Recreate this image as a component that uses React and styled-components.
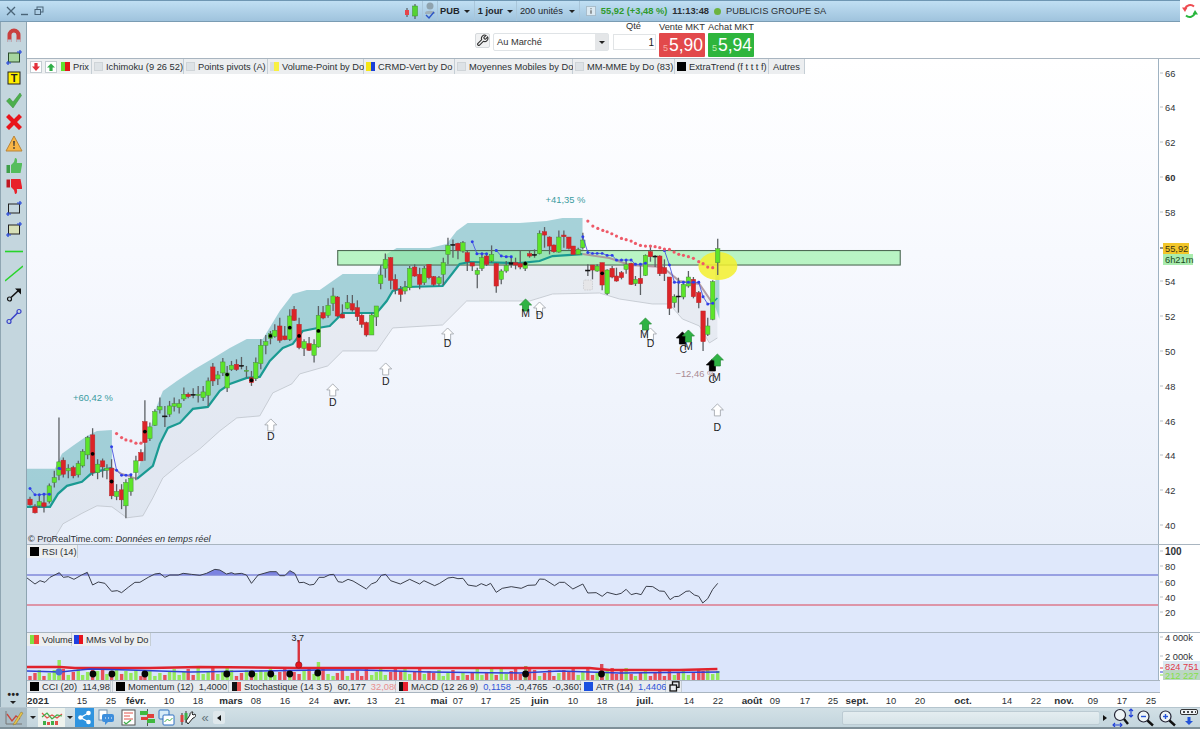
import React from "react";
import styled, { createGlobalStyle } from "styled-components";

const Global = createGlobalStyle`
  html, body { margin: 0; padding: 0; background: #fff; }
  body { font-family: "Liberation Sans", Arial, sans-serif; color: #2b2f33; }
  * { box-sizing: border-box; }
`;

/* ---------- chart data (read from the picture) ---------- */
const conv = (ox, oy, pts) => pts.map(([x, y]) => [ox + x / 3, oy + y / 3]);
const str = (pts) => pts.map((p) => p.join(",")).join(" ");
const cand = (ox, oy, rows) =>
  rows.map(([x, wt, bt, bb, wb, c, d]) => ({
    x: ox + x / 3, wt: oy + wt / 3, bt: oy + bt / 3, bb: oy + bb / 3, wb: oy + wb / 3, c, d: d == null ? null : oy + d / 3,
  }));

const candles = [
  ...cand(20, 380, [
    [30,348,355,372,375,"r"],[45,370,378,396,398,"r"],[58,345,362,375,380,"g"],[72,340,366,377,395,"r"],
    [88,308,315,362,368,"g"],[103,270,290,305,320,"g"],[117,110,243,283,298,"g"],[130,230,238,280,290,"r"],
    [145,250,262,270,292,"g"],[160,255,260,285,292,"r"],[175,240,248,282,290,"g"],[188,205,212,255,260,"g"],
    [203,165,170,222,235,"g"],[218,142,162,275,285,"r",219],[233,235,250,275,295,"g"],[248,233,240,258,290,"r"],
    [261,250,262,268,295,"g"],[275,235,262,345,355,"r",302],[290,310,332,347,358,"g"],[305,310,327,357,385,"r"],
    [318,295,305,375,412,"g"],[333,280,292,332,345,"g"],[348,225,240,275,298,"g"],[363,205,215,240,240,"r"],
    [375,58,122,185,240,"r",152],[390,125,138,173,180,"g"],[405,85,92,133,135,"g"],[420,50,77,87,98,"g"],
    [435,75,105,108,138,"k"],[449,60,75,100,108,"g"],[463,50,68,76,92,"g"],[478,55,68,80,98,"g"],
    [492,20,40,54,60,"g"],[505,35,40,47,52,"r"],[520,22,40,42,52,"k"],[535,15,40,44,65,"g"],
    [550,15,33,50,60,"g"],[565,-10,0,43,75,"g"],
  ]),
  ...cand(0, 0, [
    [639,1086,1098,1140,1155,"r"],[654,1110,1122,1134,1152,"g"],[669,1071,1083,1116,1125,"g"],[682,1095,1116,1161,1173,"g",1121],
  ]),
  ...cand(230, 210, [
    [5,450,463,476,480,"g"],[20,445,460,476,480,"r"],[35,438,463,465,475,"k"],[50,465,478,480,500,"g"],
    [65,480,500,515,525,"r",508],[78,440,455,503,510,"g"],[93,385,403,458,475,"g"],[108,372,392,403,430,"g"],
    [122,360,368,382,400,"g",375],[135,340,358,376,380,"g"],[150,320,345,388,395,"r"],[165,345,375,386,388,"r"],
    [180,295,315,385,390,"g",350],[193,285,295,328,330,"r"],[208,320,340,410,415,"r",375],[223,385,392,412,435,"g"],
    [238,378,398,418,420,"r"],[253,385,400,433,455,"g"],[266,285,313,408,410,"g",360],[280,285,305,321,325,"r"],
    [295,262,283,313,320,"g"],[310,230,255,277,300,"g"],[323,255,258,315,318,"r"],[338,280,310,321,322,"r"],
    [353,252,275,292,295,"g"],[368,252,278,297,302,"r"],[383,268,290,317,330,"r"],[396,310,313,340,350,"r"],
    [410,332,335,372,377,"r"],[426,305,312,372,372,"g"],[440,285,285,318,345,"g"],[453,163,192,218,235,"g"],
    [467,127,145,172,200,"g"],[483,138,140,208,235,"r"],[497,190,205,235,250,"r"],[513,225,235,250,272,"r"],
    [526,210,228,240,250,"g"],[540,165,172,230,238,"g"],[555,160,168,195,197,"r"],[570,170,190,220,235,"r"],
    [584,165,172,215,222,"g"],[598,160,160,200,205,"r"],[612,195,197,220,225,"r"],[628,195,200,218,225,"g"],
    [641,140,155,190,222,"g"],[655,80,103,130,160,"g"],[670,85,100,102,140,"k"],[685,95,97,118,145,"r"],
    [700,90,95,120,125,"g"],[713,120,125,152,180,"r"],[728,155,155,165,180,"r"],[743,170,178,190,232,"g"],
    [757,125,140,172,180,"g"],[771,130,135,160,165,"r"],[786,103,130,150,155,"g"],[800,155,158,225,245,"r"],
    [815,175,180,205,220,"g"],[830,150,163,180,185,"g"],[845,140,155,160,170,"k"],[858,140,155,162,175,"r"],
    [872,118,158,168,175,"r"],
  ]),
  ...cand(520, 190, [
    [17,210,215,232,240,"g",218],[30,178,188,195,200,"r"],[45,175,190,193,200,"k"],[60,118,127,188,190,"g"],
    [75,108,122,132,170,"r"],[90,136,138,165,190,"r"],[103,160,162,182,185,"r"],[118,118,138,183,185,"g"],
    [133,118,132,137,170,"r"],[148,138,138,172,175,"r"],[161,165,165,190,190,"r"],[176,170,175,190,192,"g"],
    [190,125,147,170,175,"g"],[205,220,237,239,255,"k"],[219,222,222,237,265,"r"],[233,220,225,240,242,"g"],
    [248,215,215,282,298,"r",247],[263,235,237,308,312,"g"],[278,225,232,258,262,"r"],[291,230,255,270,272,"r"],
    [306,240,245,260,265,"r"],[320,210,220,235,248,"g"],[335,215,217,280,282,"r"],[348,255,265,278,285,"g"],
    [363,225,262,278,312,"r"],[378,190,193,253,255,"g"],[393,162,182,197,212,"r"],[407,192,195,197,228,"k"],
    [421,193,195,248,255,"r"],[435,205,230,248,270,"r"],[450,258,258,352,372,"r"],[465,310,317,335,350,"g"],
    [477,260,315,317,365,"k"],[492,272,280,318,325,"g"],[507,240,258,285,290,"g"],[522,258,265,317,322,"r"],
    [538,300,305,335,352,"r"],[551,360,360,452,480,"r"],[565,380,405,430,435,"g"],[580,268,272,385,388,"g"],
    [595,143,173,215,252,"g"],
  ]),
].sort((a, b) => a.x - b.x);

const upper1 = [[27,468],[55,468],[62,453],[73,445],[87,435],[97,430],[112,429]];
const mid1 = [[27,506],[50,506],[58,493],[67,485],[82,481],[92,472],[112,467]];
const upper2 = [[137,478],[140,463],[148,437],[155,410],[163,390],[177,380],[195,368],[212,358],[230,347],[247,338],[263,338],[280,310],[293,293],[307,289],[320,289],[330,282],[343,273],[357,273],[377,273],[387,253],[397,247],[430,247],[447,243],[457,230],[468,222],[520,222],[547,220],[563,217],[583,217]];
const mid2 = [[137,478],[153,465],[160,443],[168,427],[180,422],[193,408],[208,406],[220,390],[230,383],[247,377],[260,376],[270,360],[283,347],[293,343],[303,330],[318,327],[330,325],[343,312],[377,312],[387,300],[393,290],[407,286],[443,285],[460,263],[470,261],[520,262],[540,260],[553,255],[583,253]];
const dull1 = [[112,467],[122,473],[137,478]];
const dull2 = [[583,253],[610,257],[630,264],[663,266],[680,280],[700,283],[713,302]];
const tail = [[713,302],[718,297]];
const lower = [[27,558],[53,540],[63,523],[83,512],[97,505],[112,506],[127,517],[143,515],[153,497],[163,477],[180,463],[200,448],[220,430],[237,417],[260,415],[273,392],[292,383],[300,373],[328,365],[343,350],[377,350],[393,327],[443,324],[467,300],[530,300],[553,293],[600,292],[620,298],[653,303],[670,303],[683,318],[700,325],[710,342],[718,337]];
const midAll = [...mid1, ...dull1.slice(1, 2), ...mid2, ...dull2.slice(1), ...tail.slice(1)];

const redDots = [
  ...conv(20, 380, [[290,158],[305,170],[318,177],[333,180],[348,187],[363,187]]),
  ...conv(520, 190, [[205,90],[220,105],[235,112],[250,118],[263,122],[277,128],[291,135],[306,142],[320,146],[335,150],[348,157],[363,163],[378,165],[393,165],[407,167],[421,170],[435,174],[450,175],[464,183],[478,190],[492,193],[507,197],[522,202],[538,212],[551,218],[565,228],[580,230]]),
];
const blueRuns = [
  conv(20, 380, [[30,323],[45,342],[58,342],[72,340],[88,340]]),
  conv(20, 380, [[117,262],[120,264]]),
  conv(20, 380, [[275,198],[290,268],[305,283],[318,283],[333,282]]),
  conv(230, 210, [[728,92],[742,128],[757,128],[771,128]]),
  conv(230, 210, [[800,118],[815,135],[830,137],[845,137]]),
  conv(520, 190, [[190,137],[205,184],[219,187],[233,187],[248,187],[263,193],[278,193],[291,207],[306,207],[320,207],[335,207],[348,220],[363,220],[378,217]]),
  conv(520, 190, [[435,178],[450,222],[465,274],[478,274],[492,274],[507,274],[522,274],[538,274],[551,317],[565,339],[580,337]]),
];
const arrows = [
  [271,418,"#fff","D",271,439],[333,383,"#fff","D",333,405],[386,362,"#fff","D",386,384],[448,327,"#fff","D",448,346],
  [526,298,"#2fb344","M",526,316],[540,301,"#fff","D",540,318],[651,327,"#fff","D",651,346],[646,317,"#2fb344","M",645,337],
  [683,331,"#000","C",684,352],[689,329,"#2fb344","M",689,349],[713,358,"#000","C",713,382],[718,353,"#2fb344","M",717,380],
  [718,403,"#fff","D",718,430],
];
const priceTicks = [[66,72],[64,106],[62,141],[60,176,1],[58,211],[54,280],[52,315],[50,350],[48,385],[46,420],[44,454],[42,489],[40,524]];
const rsi = [
  ...conv(0, 540, [[80,113],[105,132],[120,122],[135,127],[150,112],[178,98],[190,112],[205,110],[222,118],[245,105],[262,97],[278,135],[295,126],[315,130],[335,154],[352,152],[365,158],[385,142],[405,127],[420,127],[445,112],[465,102],[480,100],[495,112],[510,105],[535,105],[550,100],[575,103],[600,106],[620,100],[645,88],[660,90],[680,102],[695,98],[705,102],[725,100],[740,105],[755,130],[775,105],[810,95],[830,95]]),
  ...conv(280, 560, [[0,47],[15,47],[30,32],[45,40],[58,68],[72,67],[90,75],[103,73],[118,52],[133,52],[150,44],[162,43],[175,65],[188,67],[205,58],[220,63],[260,87],[275,72],[290,66],[305,46],[318,43],[333,62],[362,72],[390,58],[420,72],[433,62],[465,77],[480,70],[505,54],[520,52],[535,56],[550,55],[565,75],[590,79],[605,71],[620,77],[633,70],[650,97],[668,85],[695,80],[725,85],[745,76],[768,75],[780,57],[795,58],[825,77],[840,67],[855,67],[880,87],[910,72],[925,99],[950,98],[968,109],[983,97],[1010,104],[1025,100],[1040,88],[1055,104],[1070,100],[1085,104],[1100,79],[1120,80],[1140,93],[1155,94],[1172,119],[1185,110],[1198,109],[1220,94],[1230,93],[1245,105],[1258,109],[1270,129],[1285,116],[1300,88],[1315,70]]),
];
const dates = [["2021",38,1],["15",82],["25",111],["févr.",136,1],["10",169],["18",198],["mars",231,1],["08",256],["16",285],["24",314],["avr.",342,1],["13",372],["21",400],["mai",439,1],["07",458],["17",486],["25",515],["juin",540,1],["10",573],["18",602],["juil.",645,1],["14",689],["22",718],["août",752,1],["09",775],["17",805],["25",833],["sept.",857,1],["10",891],["20",920],["oct.",963,1],["14",1007],["22",1036],["nov.",1064,1],["09",1093],["17",1122],["25",1151]];
const volDots = [[93,674],[112,674],[145,674],[227,674],[252,674],[271,674],[290,674],[318,673],[526,674],[602,674]];
const volH = (i) => 4 + ((i * 37 + (i % 7) * 11) % 9);

const FS = 9.3;

/* ---------- layout ---------- */
const Page = styled.div`
  width: 1200px; height: 729px; overflow: hidden; display: flex; flex-direction: column; background: #fff; font-size: ${FS}px;
`;
const TopRow = styled.div`display: flex; height: 22px;`;
const TitleBar = styled.div`
  width: 1180px; height: 22px; display: flex; align-items: center; padding-left: 6px;
  background: linear-gradient(180deg, #c0dff3, #9fc3dd);
  border-top: 1px solid #6f97b3; border-bottom: 1px solid #7a9cb3;
`;
const WindowButtons = styled.div`display: flex; align-items: center; gap: 5px; width: 395px;`;
const ToolSegment = styled.div`
  display: flex; align-items: center; gap: ${(p) => p.$gap ?? 4}px; height: 20px; padding: 0 ${(p) => p.$pr ?? 3}px 0 ${(p) => p.$pl ?? 3}px;
  border-right: 1px solid #a9c6da; font-weight: ${(p) => (p.$bold ? 700 : 400)}; color: #1e252b; white-space: nowrap;
`;
const Caret = styled.span`
  display: inline-block; width: 0; height: 0;
  border-left: 3px solid transparent; border-right: 3px solid transparent; border-top: 3.5px solid #222;
`;
const Quote = styled.div`display: flex; align-items: center; gap: 5px; padding-left: 6px; white-space: nowrap;`;
const Gain = styled.span`color: #2f9a2c; font-weight: 700;`;
const Clock = styled.span`font-weight: 700;`;
const LiveDot = styled.span`width: 7px; height: 7px; border-radius: 50%; background: #6cb33f;`;
const Corner = styled.div`flex: 1; display: flex; align-items: center; justify-content: center;`;

const Body = styled.div`display: flex; flex: 1; min-height: 0;`;
const Sidebar = styled.div`
  width: 27px; display: flex; flex-direction: column; align-items: center; padding-top: 4px; gap: 2.6px;
  background: #c4d6de; border-left: 1px solid #8fa6b2; border-right: 1px solid #8da4b1; position: relative;
`;
const SideIcon = styled.div`width: 22px; height: 19px; display: flex; align-items: center; justify-content: center;`;
const SideMore = styled.div`
  margin-top: auto; margin-bottom: 3px; font-weight: 700; font-size: 10px; line-height: 6px; text-align: center; color: #222; letter-spacing: 0.5px;
`;
const Content = styled.div`flex: 1; min-width: 0; display: flex; flex-direction: column;`;

const OrderRow = styled.div`
  height: 36px; display: flex; align-items: flex-end; padding: 0 0 1px 448px; gap: 4px;
`;
const WrenchButton = styled.div`
  width: 15px; height: 15px; margin-bottom: 9px; border: 1px solid #d5d9dc; border-radius: 2px; background: #f1f2f3;
  display: flex; align-items: center; justify-content: center;
`;
const SelectBox = styled.div`
  width: 116px; height: 18px; margin-bottom: 6px; margin-left: -1px; display: flex; border: 1px solid #dfe3e6; border-radius: 2px; color: #333;
  align-items: center; padding-left: 3px; justify-content: space-between;
`;
const SelectArrow = styled.div`
  width: 13px; height: 100%; background: #e4e6e8; display: flex; align-items: center; justify-content: center;
`;
const Field = styled.div`display: flex; flex-direction: column; align-items: ${(p) => p.$align || "center"}; margin-left: ${(p) => p.$ml || 0}px;`;
const FieldLabel = styled.div`height: 11px; line-height: 11px; color: #333; margin-bottom: ${(p) => p.$mb || 0}px; padding-right: ${(p) => p.$pr || 0}px; white-space: nowrap;`;
const QtyInput = styled.div`
  width: 43px; height: 16px; margin-bottom: 7px; border: 1px solid #e1e4e6; text-align: right; padding-right: 1px; line-height: 15px; color: #222; font-size: 10px;
`;
const PriceButton = styled.div`
  width: 46px; height: 24px; background: ${(p) => p.$bg}; color: #fff; font-size: 17.5px; line-height: 24px; text-align: right; padding-right: 2px; border-radius: 1px;
  & > small { font-size: 9px; color: ${(p) => p.$tint}; margin-right: 1px; }
`;
const Stack = styled.div`flex: 1; min-height: 0; display: flex; flex-direction: column;`;
const Pane = styled.div`
  display: flex; position: relative; height: ${(p) => p.$h}px; border-top: 1px solid #a9b5c0;
`;
const Plot = styled.svg`
  display: block; width: 1132px; height: 100%; flex: none; border-right: 1px solid #9fb2c2;
  background: ${(p) => p.$bg};
  font-family: "Liberation Sans", Arial, sans-serif;
`;
const AxisSvg = styled.svg`display: block; flex: 1; height: 100%; overflow: hidden; font-family: "Liberation Sans", Arial, sans-serif;`;
const LegendBar = styled.div`
  position: absolute; left: 0; top: ${(p) => p.$top || 0}px; display: flex; height: ${(p) => p.$h || 15}px; align-items: stretch;
`;
const LegendTool = styled.div`
  width: 16px; background: #eef0f1; display: flex; align-items: center; justify-content: center; padding-left: ${(p) => p.$pl || 0}px;
`;
const LegendItem = styled.div`
  width: ${(p) => p.$w}px; flex: none; display: flex; align-items: center; gap: 3px; padding-left: ${(p) => p.$pl ?? 2}px; background: #eceef0;
  border-right: 1px solid #c5ced5; white-space: nowrap; color: #2b2f33;
`;
const Swatch = styled.span`
  width: 9px; height: 9px; flex: none;
  background: linear-gradient(90deg, ${(p) => p.$a} 50%, ${(p) => p.$b || p.$a} 50%);
  border: ${(p) => (p.$soft ? "1px solid #cfd4d8" : "0")};
`;
const Strip = styled.div`
  height: 14px; display: flex; background: #dde7fb; border-top: 1px solid #a9b5c0; border-bottom: 1px solid #a9b5c0; width: 1133px;
`;
const StripItem = styled.div`
  width: ${(p) => p.$w}px; flex: none; display: flex; align-items: center; gap: 3px; padding-left: ${(p) => p.$pl ?? 3}px; background: #e8ebef;
  border-right: 1px solid #c3ccd4; white-space: nowrap;
`;
const Val = styled.span`color: ${(p) => p.$c || "#2b2f33"}; margin-left: ${(p) => p.$ml ?? 2}px;`;
const DateAxis = styled.svg`display: block; width: 1173px; height: 14px; flex: none; font-family: "Liberation Sans", Arial, sans-serif;`;

const Toolbar = styled.div`
  height: 22px; display: flex; align-items: center; background: linear-gradient(180deg, #d2e0e6, #c3d5dd);
  border-top: 1px solid #b5c5ce; border-bottom: 2px solid #7f9099;
`;
const ToolBtn = styled.div`
  width: ${(p) => p.$w || 21}px; height: 19px; flex: none; display: flex; align-items: center; justify-content: center;
  background: ${(p) => p.$bg || "transparent"};
`;
const ScrollBtn = styled.div`
  width: 12px; height: 13px; flex: none; margin: 0 ${(p) => p.$mr || 0}px 0 ${(p) => p.$ml || 0}px; display: flex; align-items: center; justify-content: center; background: ${(p) => p.$bg || "#dfe8ec"}; border-radius: 2px;
`;
const Tri = styled.span`
  width: 0; height: 0; border-top: 3.5px solid transparent; border-bottom: 3.5px solid transparent;
  ${(p) => (p.$left ? "border-right: 4px solid #111;" : "border-left: 4px solid #111;")}
`;
const Track = styled.div`flex: 1; height: 14px; display: flex; justify-content: flex-end;`;
const Thumb = styled.div`width: 258px; height: 100%; background: linear-gradient(180deg, #e4edf0, #d6e3e8); border: 1px solid #bccbd3; border-radius: 2px;`;
const Chevrons = styled.span`width: 16px; text-align: center; font-size: 13px; color: #66757d; flex: none; line-height: 16px;`;

/* ---------- icons ---------- */
const I = ({ w = 18, h = 17, vb = "0 0 18 17", children }) => (
  <svg width={w} height={h} viewBox={vb}>{children}</svg>
);
const SIDE = [
  <I key="a"><path d="M2.5 15V8a6.5 6.5 0 0 1 13 0v7h-4V8a2.5 2.5 0 0 0-5 0v7z" fill="#c9403e" /><path d="M2.5 12.5h4V15h-4zM11.5 12.5h4V15h-4z" fill="#b9c7d3" /></I>,
  <I key="b"><rect x="3.5" y="4" width="11" height="9" fill="#a6d6a0" stroke="#2a4a2a" /><path d="M1 14h5M3 12v4M12 3h5M15 1v4" stroke="#2444d8" strokeWidth="1.2" /></I>,
  <I key="c"><rect x="3" y="2" width="12" height="12" fill="#ffee00" stroke="#222" /><text x="9" y="12" textAnchor="middle" fontSize="11" fontWeight="700" fill="#222">T</text></I>,
  <I key="d"><path d="M1.5 9l3-3 3.5 4 7-9 1.5 2.5L8 16z" fill="#4cb04c" stroke="#3a8a3a" strokeWidth=".5" /></I>,
  <I key="e"><path d="M4 1l5 5 5-5 3 3-5 5 5 5-3 3-5-5-5 5-3-3 5-5-5-5z" fill="#e8141c" /></I>,
  <I key="f"><path d="M9 1l8 15H1z" fill="#f8b545" stroke="#b8843a" /><path d="M8.2 6h1.6l-.3 5h-1zM8.2 12.2h1.6v1.6H8.2z" fill="#333" /></I>,
  <I key="g"><path d="M1.5 8h3.5v8H1.5z" fill="#3f9f4a" /><path d="M6 8l3-3 1-4c2 0 2.5 2 1.8 5H17v2l-1.5 8H6z" fill="#54bd5c" /></I>,
  <I key="h"><path d="M1.5 1.5h3.5v8H1.5z" fill="#c01822" /><path d="M6 9l3 3 1 4c2 0 2.5-2 1.8-5H17V9l-1.5-8H6z" fill="#e8212a" /></I>,
  <I key="i"><rect x="3.5" y="4" width="11" height="9" fill="none" stroke="#222" /><path d="M1 14h5M3 12v4M12 3h5M15 1v4" stroke="#2444d8" strokeWidth="1.2" /></I>,
  <I key="j"><rect x="3.5" y="4" width="11" height="9" fill="#d8e0b8" stroke="#222" /><path d="M1 14h5M3 12v4M12 3h5M15 1v4" stroke="#2444d8" strokeWidth="1.2" /></I>,
  <I key="k"><path d="M0 8.5h18" stroke="#27d42a" strokeWidth="1.6" /></I>,
  <I key="l"><path d="M0 16L18 1" stroke="#27d42a" strokeWidth="1.4" /></I>,
  <I key="m"><circle cx="4.5" cy="13" r="2" fill="none" stroke="#111" strokeWidth="1.2" /><path d="M6 11.5L14 4" stroke="#111" strokeWidth="1.6" /><path d="M10 2.5h6v6z" fill="#111" /></I>,
  <I key="n"><circle cx="4" cy="13.5" r="2" fill="none" stroke="#3a44c8" strokeWidth="1.2" /><circle cx="14" cy="3.5" r="2" fill="none" stroke="#3a44c8" strokeWidth="1.2" /><path d="M5.5 12L12.5 5" stroke="#3a44c8" strokeWidth="1.6" /></I>,
];
const PlusBtn = ({ color, up }) => (
  <svg width="12" height="12" viewBox="0 0 12 12">
    <rect x=".5" y=".5" width="11" height="11" fill="#fff" stroke="#c4ccd2" />
    {up ? <path d="M6 2.5L10 6.5H7.6V10H4.4V6.5H2z" fill={color} /> : <path d="M4.4 2h3.2v3.6H10L6 10 2 5.6h2.4z" fill={color} />}
  </svg>
);
const Lens = ({ plus, minus }) => (
  <svg width="20" height="18" viewBox="0 0 20 18">
    <circle cx="7.5" cy="7.5" r="5.5" fill="#eef4f7" stroke="#223" strokeWidth="1.2" />
    <path d="M11.5 11.5L17 16.5" stroke="#111" strokeWidth="2.4" />
    {(plus || minus) && <path d="M5 7.5h5" stroke="#2454d8" strokeWidth="1.4" />}
    {plus && <path d="M7.5 5v5" stroke="#2454d8" strokeWidth="1.4" />}
  </svg>
);

const UpArrow = ({ x, y, fill }) => (
  <path
    d={`M${x} ${y}l6 6h-3v6h-6v-6h-3z`}
    fill={fill}
    stroke={fill === "#fff" ? "#9aa0a6" : fill === "#000" ? "#000" : "#2a8f3a"}
    strokeWidth=".8"
  />
);

/* ---------- chart panes ---------- */
const Candle = ({ c }) => {
  const color = c.c === "g" ? "#5ce52a" : c.c === "r" ? "#dc2327" : "#111";
  const border = c.c === "g" ? "#4a8a40" : c.c === "r" ? "#b52a2c" : "#111";
  return (
    <g>
      <line x1={c.x} x2={c.x} y1={c.wt} y2={c.wb} stroke="#5c6064" strokeWidth="1.3" />
      <rect x={c.x - 2.2} y={c.bt} width="4.4" height={Math.max(1, c.bb - c.bt)} fill={color} stroke={border} strokeWidth=".5" />
      {c.d != null && <circle cx={c.x} cy={c.d} r="1.9" fill="#000" />}
    </g>
  );
};

const PricePlot = () => {
  const rev = (a) => [...a].reverse();
  return (
    <Plot viewBox="27 58 1132 485" $bg="linear-gradient(180deg, #ffffff 0%, #f7f9fe 40%, #e9effa 100%)">
      <polygon points={str([...midAll, ...rev(lower)])} fill="#c5cbd6" opacity=".27" />
      <polyline points={str(lower)} fill="none" stroke="#b9bec6" strokeWidth="1" opacity=".7" />
      <polygon points={str([...upper1, ...rev(mid1)])} fill="#6fb8bf" opacity=".6" />
      <polygon points={str([...upper2, ...rev(mid2)])} fill="#6fb8bf" opacity=".6" />
      <polygon points="716,250 720,250 720,318 716,306" fill="#6fb8bf" opacity=".55" />
      <rect x="338" y="249.5" width="563" height="14.5" fill="#8cf09a" fillOpacity=".58" stroke="#4f6a55" strokeWidth="1.1" />
      <ellipse cx="718.5" cy="265" rx="19.5" ry="14" fill="#f3f02e" opacity=".85" />
      <polyline points={str(mid1)} fill="none" stroke="#1a9a92" strokeWidth="2.2" />
      <polyline points={str(mid2)} fill="none" stroke="#1a9a92" strokeWidth="2.2" />
      <polyline points={str(dull1)} fill="none" stroke="#b39aa0" strokeWidth="1.6" />
      <polyline points={str(dull2)} fill="none" stroke="#a98d98" strokeWidth="2" opacity=".85" />
      <polyline points={str(tail)} fill="none" stroke="#1a9a92" strokeWidth="1.6" />
      {candles.map((c, i) => <Candle key={i} c={c} />)}
      {blueRuns.map((r, i) => (
        <g key={i}>
          <polyline points={str(r)} fill="none" stroke="#4a55e0" strokeWidth=".9" />
          {r.map(([x, y], j) => <circle key={j} cx={x} cy={y} r="1.5" fill="#2f3fe8" />)}
        </g>
      ))}
      {redDots.map(([x, y], i) => <circle key={i} cx={x} cy={y} r="1.6" fill="#ee5a68" />)}
      <rect x="584" y="279" width="9" height="10" rx="1.5" fill="#e6e6e8" stroke="#bcbcc0" strokeWidth=".6" strokeDasharray="1.5 1" />
      {arrows.map(([x, y, f, l, tx, ty], i) => (
        <g key={i}>
          <UpArrow x={x} y={y} fill={f} />
          <text x={tx} y={ty} fontSize="10.5" textAnchor="middle" fill="#1b1b1b">{l}</text>
        </g>
      ))}
      <text x="73" y="400" fontSize="9.4" fill="#3a9ba0">+60,42 %</text>
      <text x="546" y="202" fontSize="9.4" fill="#3a9ba0">+41,35 %</text>
      <text x="676" y="376" fontSize="9.4" fill="#a88a92">−12,46 %</text>
      <text x="28" y="541" fontSize="9.2" fill="#2b2f33">© ProRealTime.com: <tspan fontStyle="italic">Données en temps réel</tspan></text>
    </Plot>
  );
};

const PriceAxis = () => (
  <AxisSvg viewBox="1159 58 41 485">
    {priceTicks.map(([v, y, b]) => (
      <g key={v}>
        <line x1="1160" x2="1163" y1={y} y2={y} stroke="#b7bec4" />
        <text x="1165" y={y + 3.5} fontSize={FS} fontWeight={b ? 700 : 400} fill="#2f3336">{v}</text>
      </g>
    ))}
    <line x1="1160" x2="1163" y1="247" y2="247" stroke="#222" />
    <rect x="1163" y="242" width="26" height="11" fill="#f2c62a" />
    <text x="1165" y="251" fontSize={FS} fill="#3a3410">55,92</text>
    <rect x="1163" y="253" width="30" height="11" fill="#a9ecae" />
    <text x="1165" y="262" fontSize={FS} fill="#1b4a20">6h21m</text>
  </AxisSvg>
);

const RsiPlot = () => (
  <Plot viewBox="27 545 1132 87" $bg="#dfe8fb">
    <defs><clipPath id="ob"><rect x="27" y="545" width="1132" height="30" /></clipPath></defs>
    <polygon points={`${str(rsi)} 718,575 27,575`} fill="#5a62d8" opacity=".75" clipPath="url(#ob)" />
    <line x1="27" x2="1159" y1="575" y2="575" stroke="#8089da" strokeWidth="1.5" />
    <line x1="27" x2="1159" y1="605" y2="605" stroke="#dc7a8c" strokeWidth="1.5" />
    <polyline points={str(rsi)} fill="none" stroke="#3a3e4a" strokeWidth="1" />
  </Plot>
);
const RsiAxis = () => (
  <AxisSvg viewBox="1159 545 41 87">
    {[["100",551,1],["80",566],["60",582],["40",597],["20",612]].map(([v, y, b]) => (
      <g key={v}>
        <line x1="1160" x2="1163" y1={y} y2={y} stroke="#b7bec4" />
        <text x="1165" y={y + 3.5} fontSize={b ? 10 : FS} fontWeight={b ? 700 : 400} fill="#2f3336">{v}</text>
      </g>
    ))}
  </AxisSvg>
);
const VolPlot = () => {
  const red = [[27,667],[60,667],[75,668],[150,668],[200,667],[300,668],[400,668],[500,668],[590,668],[610,670],[680,670],[718,669]];
  const blue = [[27,671],[60,672],[90,669],[130,670],[190,672],[260,671],[320,670],[360,670],[430,672],[520,673],[560,671],[620,673],[720,672]];
  return (
    <Plot viewBox="27 633 1132 47" $bg="#dbe5fb">
      {candles.map((c, i) => {
        const g = c.c === "g";
        const h = volH(i);
        return <rect key={i} x={c.x - 1.7} y={680 - h} width="3.4" height={h} fill={g ? "#93e85e" : "#e8505c"} />;
      })}
      <rect x="57.5" y="660" width="3.4" height="20" fill="#93e85e" />
      <rect x="317" y="662" width="3.4" height="18" fill="#93e85e" />
      <rect x="524.5" y="666" width="3.4" height="14" fill="#93a85e" />
      <rect x="600.5" y="664" width="3.4" height="16" fill="#d84a58" />
      <polyline points={str(red)} fill="none" stroke="#e0222c" strokeWidth="2.4" />
      <polyline points={str(blue)} fill="none" stroke="#2d3fd4" strokeWidth="1.5" />
      <line x1="299" x2="299" y1="640" y2="665" stroke="#d9333c" strokeWidth="2.4" />
      <circle cx="299" cy="665" r="3.2" fill="#e8141c" stroke="#7a1a20" strokeWidth=".6" />
      <circle cx="59" cy="672" r="3.4" fill="#4a6cd8" />
      {volDots.map(([x, y]) => <circle key={x} cx={x} cy={y} r="3.4" fill="#050505" />)}
      <text x="298" y="640.5" fontSize="9" textAnchor="middle" fill="#222">3,7</text>
    </Plot>
  );
};
const VolAxis = () => (
  <AxisSvg viewBox="1159 633 41 47">
    <text x="1165" y="641" fontSize={FS} fill="#2f3336">4 000k</text>
    <text x="1165" y="660" fontSize={FS} fill="#2f3336">2 000k</text>
    <line x1="1160" x2="1163" y1="637" y2="637" stroke="#b7bec4" />
    <line x1="1160" x2="1163" y1="656" y2="656" stroke="#b7bec4" />
    <rect x="1163" y="661" width="37" height="9" fill="#dce8f2" />
    <text x="1165" y="669.5" fontSize={FS} fill="#e03a48">824 751</text>
    <rect x="1163" y="670" width="37" height="10" fill="#bcd6c4" />
    <text x="1165" y="678.5" fontSize={FS} fill="#84e048">212 227</text>
    <path d="M1160 668h3" stroke="#e03a48" /><path d="M1160 672h3" stroke="#2d3fd4" /><path d="M1160 675h3" stroke="#84e048" />
  </AxisSvg>
);

/* ---------- page ---------- */
export default function App() {
  return (
    <Page>
      <Global />
      <TopRow>
        <TitleBar>
          <WindowButtons>
            <svg width="10" height="10" viewBox="0 0 10 10"><path d="M1 1l8 8M9 1l-8 8" stroke="#4a6478" strokeWidth="1.3" /></svg>
            <svg width="7" height="10" viewBox="0 0 7 10"><path d="M0 8.5h7" stroke="#4a6478" strokeWidth="1.4" /></svg>
            <svg width="10" height="10" viewBox="0 0 10 10" style={{ marginLeft: 1 }}><rect x="3" y="1" width="6" height="5" fill="none" stroke="#4a6478" /><rect x="1" y="3.5" width="5.5" height="5" fill="#aecee5" stroke="#4a6478" /></svg>
          </WindowButtons>
          <ToolSegment $pl={2} $pr={2}>
            <svg width="17" height="15" viewBox="0 0 17 15"><path d="M4 4v9" stroke="#444" /><rect x="2" y="6" width="4" height="5" fill="#e5444a" /><path d="M12 0v15" stroke="#444" /><rect x="9.5" y="2" width="5" height="10" fill="#55d232" stroke="#3b8f2b" strokeWidth=".5" /></svg>
          </ToolSegment>
          <ToolSegment $pl={1} $pr={1}>
            <svg width="12" height="18" viewBox="0 0 12 18"><circle cx="6" cy="4" r="3.5" fill="#8fa3ae" /><path d="M1 11c0-3 10-3 10 0v1H1z" fill="#9fb0ba" /><path d="M2 13l3 3 5-6" fill="none" stroke="#2c55c8" strokeWidth="1.4" /></svg>
          </ToolSegment>
          <ToolSegment $bold $pl={2} $pr={4}>PUB <Caret /></ToolSegment>
          <ToolSegment $bold $pl={3} $pr={3}>1 jour <Caret /></ToolSegment>
          <ToolSegment $pl={3} $pr={4} $gap={6}>200 unités <Caret /></ToolSegment>
          <Quote>
            <svg width="10" height="10" viewBox="0 0 11 11"><rect x=".5" y=".5" width="10" height="10" fill="#dbe9f2" stroke="#a7bac7" /><path d="M5.5 2.4v1.3M5.5 4.8v3.8" stroke="#555" strokeWidth="1.2" /></svg>
            <Gain>55,92 (+3,48 %)</Gain>
            <Clock>11:13:48</Clock>
            <LiveDot />
            <span>PUBLICIS GROUPE SA</span>
          </Quote>
        </TitleBar>
        <Corner>
          <svg width="16" height="16" viewBox="0 0 16 16">
            <path d="M12 3.5A5.5 5.5 0 0 0 3 6" fill="none" stroke="#ee4a50" strokeWidth="2" /><path d="M0 4.5h5.5L3 9z" fill="#ee4a50" />
            <path d="M4 12.5A5.5 5.5 0 0 0 13 10" fill="none" stroke="#28b63c" strokeWidth="2" /><path d="M10.5 11.5H16L13 7z" fill="#28b63c" />
          </svg>
        </Corner>
      </TopRow>
      <Body>
        <Sidebar>
          {SIDE.map((ic, i) => <SideIcon key={i}>{ic}</SideIcon>)}
          <SideMore>•••<br /><Caret /></SideMore>
        </Sidebar>
        <Content>
          <OrderRow>
            <WrenchButton>
              <svg width="13" height="13" viewBox="0 0 24 24" fill="none" stroke="#333" strokeWidth="2"><path d="M14.7 6.3a1 1 0 0 0 0 1.4l1.6 1.6a1 1 0 0 0 1.4 0l3.77-3.77a6 6 0 0 1-7.94 7.94l-6.91 6.91a2.12 2.12 0 0 1-3-3l6.91-6.91a6 6 0 0 1 7.94-7.94l-3.76 3.76z" /></svg>
            </WrenchButton>
            <SelectBox>Au Marché<SelectArrow><Caret /></SelectArrow></SelectBox>
            <Field $align="flex-end">
              <FieldLabel $mb={2} $pr={15}>Qté</FieldLabel>
              <QtyInput>1</QtyInput>
            </Field>
            <Field $ml={-1}>
              <FieldLabel>Vente MKT</FieldLabel>
              <PriceButton $bg="#e2494b" $tint="#f6b0a8"><small>5</small>5,90</PriceButton>
            </Field>
            <Field $ml={-1}>
              <FieldLabel>Achat MKT</FieldLabel>
              <PriceButton $bg="#2eb53d" $tint="#bff0b0"><small>5</small>5,94</PriceButton>
            </Field>
          </OrderRow>
          <Stack>
            <Pane $h={486}>
              <PricePlot />
              <PriceAxis />
              <LegendBar>
                <LegendTool $pl={1}><PlusBtn color="#e2323c" /></LegendTool>
                <LegendTool><PlusBtn color="#2fae48" up /></LegendTool>
                <LegendItem $w={33}><Swatch $a="#5fe02f" $b="#e01818" />Prix</LegendItem>
                <LegendItem $w={92}><Swatch $a="#dde2e6" $soft />Ichimoku (9 26 52)</LegendItem>
                <LegendItem $w={84}><Swatch $a="#dde2e6" $soft />Points pivots (A)</LegendItem>
                <LegendItem $w={96}><Swatch $a="#d8dde0" $b="#f8f040" />Volume-Point by Do</LegendItem>
                <LegendItem $w={91}><Swatch $a="#f5e616" $b="#1a40d8" />CRMD-Vert by Do</LegendItem>
                <LegendItem $w={118}><Swatch $a="#dde2e6" $soft />Moyennes Mobiles by Do</LegendItem>
                <LegendItem $w={102}><Swatch $a="#dde2e6" $soft />MM-MME by Do (83)</LegendItem>
                <LegendItem $w={94}><Swatch $a="#000" />ExtraTrend (f t t t f)</LegendItem>
                <LegendItem $w={36} $pl={4}>Autres</LegendItem>
              </LegendBar>
            </Pane>
            <Pane $h={88}>
              <RsiPlot />
              <RsiAxis />
              <LegendBar $h={13}>
                <LegendItem $w={51} $pl={3}><Swatch $a="#000" />RSI (14)</LegendItem>
              </LegendBar>
            </Pane>
            <Pane $h={48}>
              <VolPlot />
              <VolAxis />
              <LegendBar $h={13}>
                <LegendItem $w={45} $pl={3}><Swatch $a="#7fe040" $b="#f0483c" />Volume</LegendItem>
                <LegendItem $w={79}><Swatch $a="#1f3fe0" $b="#e8141c" />MMs Vol by Do</LegendItem>
              </LegendBar>
            </Pane>
            <Strip>
              <StripItem $w={84}><Swatch $a="#000" />CCI (20)<Val>114,98</Val></StripItem>
              <StripItem $w={2} $pl={0} />
              <StripItem $w={116}><Swatch $a="#000" />Momentum (12)<Val>1,4000</Val></StripItem>
              <StripItem $w={167}><Swatch $a="#111" $b="#e85050" />Stochastique (14 3 5)<Val>60,177</Val><Val $c="#e89090">32,080</Val></StripItem>
              <StripItem $w={185}><Swatch $a="#111" $b="#e82030" />MACD (12 26 9)<Val $c="#2f55d8">0,1158</Val><Val>-0,4765</Val><Val>-0,3607</Val></StripItem>
              <StripItem $w={85}><Swatch $a="#1a4fe0" />ATR (14)<Val $c="#2f55d8">1,4406</Val></StripItem>
              <StripItem $w={16}>
                <svg width="11" height="11" viewBox="0 0 11 11"><rect x="3.5" y=".8" width="6.5" height="5.5" fill="none" stroke="#111" strokeWidth="1.3" /><rect x="1" y="4" width="6.5" height="6" fill="#e8ebef" stroke="#111" strokeWidth="1.3" /></svg>
              </StripItem>
            </Strip>
            <DateAxis viewBox="27 694 1173 14">
              {dates.map(([t, x, b], i) => (
                <text key={i} x={x} y="705" textAnchor="middle" fontSize={b ? 9.8 : FS} fontWeight={b ? 700 : 400} fill="#2b2f33">{t}</text>
              ))}
            </DateAxis>
          </Stack>
        </Content>
      </Body>
      <Toolbar>
        <ToolBtn $w={27} $bg="#a9bcc6">
          <svg width="20" height="17" viewBox="0 0 20 17"><path d="M2 2v13h16" fill="none" stroke="#777" /><path d="M3 5l5 7 4-5 4 3" fill="none" stroke="#c8453c" strokeWidth="1.3" /><path d="M10 14L17 3l2 1-7 11-3 1z" fill="#e6c34a" stroke="#8a7430" strokeWidth=".5" /></svg>
        </ToolBtn>
        <ToolBtn $w={11}><Caret /></ToolBtn>
        <ToolBtn $w={27} $bg="#eef3ee">
          <svg width="22" height="17" viewBox="0 0 22 17"><path d="M1 4l5 5 5-3 5 3 5-4" fill="none" stroke="#e0524a" strokeWidth="1.2" /><path d="M1 8l5-4 5 6 5-4 5 1" fill="none" stroke="#3fae4a" strokeWidth="1.2" /><path d="M2 12h3v4H2zM10 12h3v4h-3z" fill="#3fae4a" /><path d="M6 13h3v3H6zM14 12h3v4h-3z" fill="#e0524a" /></svg>
        </ToolBtn>
        <ToolBtn $w={10}><Caret /></ToolBtn>
        <ToolBtn $w={19} $bg="#2f94df">
          <svg width="15" height="15" viewBox="0 0 15 15"><path d="M11.5 3L3.5 7.5l8 4.5" fill="none" stroke="#fff" strokeWidth="1.3" /><circle cx="11.5" cy="3" r="2.3" fill="#fff" /><circle cx="3.5" cy="7.5" r="2.3" fill="#fff" /><circle cx="11.5" cy="12" r="2.3" fill="#fff" /></svg>
        </ToolBtn>
        <ToolBtn $w={24}>
          <svg width="17" height="17" viewBox="0 0 17 17"><rect x="1" y="1" width="8" height="10" fill="#fff" stroke="#6c8fb0" /><rect x="4" y="5" width="12" height="8" rx="2" fill="#3d8edc" /><path d="M7 13v3l3-3z" fill="#3d8edc" /><path d="M7 9h1M10 9h1M13 9h1" stroke="#fff" /></svg>
        </ToolBtn>
        <ToolBtn $w={20}>
          <svg width="15" height="17" viewBox="0 0 15 17"><rect x="1" y="1" width="13" height="15" fill="#fff" stroke="#555" /><path d="M3 4h9M3 7h6M3 10h9" stroke="#e0524a" /><path d="M3 13l2 2 5-4" fill="none" stroke="#3fae4a" strokeWidth="1.3" /></svg>
        </ToolBtn>
        <ToolBtn $w={18}>
          <svg width="15" height="17" viewBox="0 0 15 17"><path d="M7.5 0v17" stroke="#555" /><path d="M0 2h8v4H0zM7 10h8v4H7z" fill="#3fb83f" /><path d="M7 5h7v4H7zM1 8h7v3H1z" fill="#e0403c" /></svg>
        </ToolBtn>
        <ToolBtn $w={21}>
          <svg width="17" height="17" viewBox="0 0 17 17"><rect x="1" y="1" width="10" height="9" rx="1" fill="#d8ecf8" stroke="#2f70c0" /><rect x="5" y="6" width="11" height="10" rx="1" fill="#fff" stroke="#2f70c0" /><path d="M6.5 13l3-3 2 2 3-3" fill="none" stroke="#3fae4a" /></svg>
        </ToolBtn>
        <ToolBtn $w={20}>
          <svg width="17" height="17" viewBox="0 0 17 17"><path d="M3 4v12M7 2v12" stroke="#333" /><rect x="1.5" y="6" width="3" height="7" fill="#e0403c" /><rect x="5.5" y="4" width="3" height="7" fill="#3fae4a" /><path d="M9 15l5-6a2.5 2.5 0 0 0 2-4l-2 1-1-1 1-2a2.5 2.5 0 0 0-3 3L7 12z" fill="#fff" stroke="#222" /></svg>
        </ToolBtn>
        <Chevrons>«</Chevrons>
        <ScrollBtn><Tri $left /></ScrollBtn>
        <Track><Thumb /></Track>
        <ScrollBtn $ml={-1} $mr={1} $bg="#c6d7de"><Tri /></ScrollBtn>
        <ToolBtn $w={22}>
          <svg width="22" height="19" viewBox="0 0 22 19"><circle cx="8" cy="7" r="5.5" fill="#eef4f7" stroke="#223" strokeWidth="1.2" /><path d="M12 11l4 5" stroke="#111" strokeWidth="2.4" /><path d="M19 1v8M17 3l2-2 2 2M17 7l2 2 2-2M1 17h9M3 15l-2 2 2 2M8 15l2 2-2 2" fill="none" stroke="#2040d8" strokeWidth="1.1" /></svg>
        </ToolBtn>
        <ToolBtn $w={23}><Lens minus /></ToolBtn>
        <ToolBtn $w={21}><Lens plus /></ToolBtn>
        <ToolBtn $w={22}>
          <svg width="18" height="17" viewBox="0 0 18 17"><rect x=".5" y=".5" width="17" height="5" rx="1.5" fill="#eef2f4" stroke="#333" /><path d="M3 3h2M7 3h2M11 3h2M15 3h1" stroke="#111" strokeWidth="1.4" /><path d="M7.5 8h3v4H13l-4 4-4-4h2.5z" fill="#2454d8" /></svg>
        </ToolBtn>
      </Toolbar>
    </Page>
  );
}
